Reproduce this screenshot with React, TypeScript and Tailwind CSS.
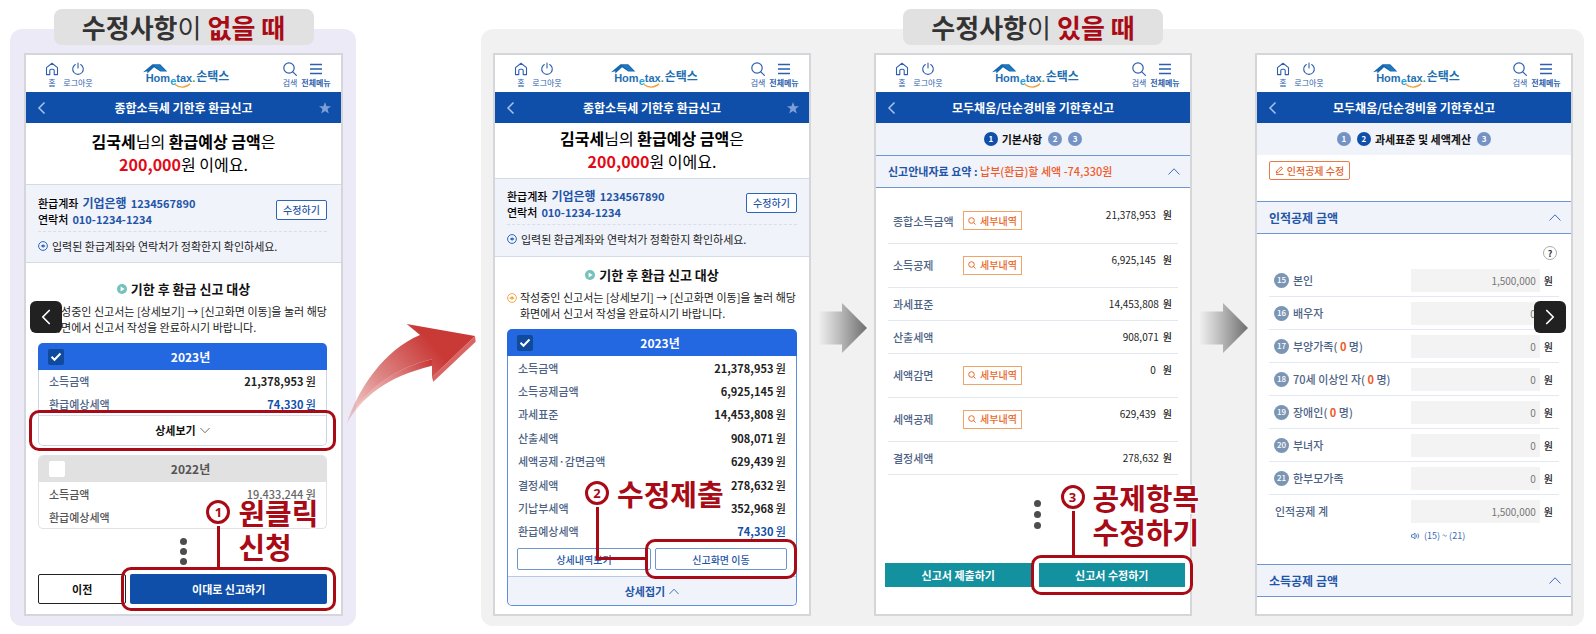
import { useState, type ReactNode } from "react";
import { ChevronLeft, ChevronRight } from "lucide-react";
import clsx from "clsx";

const summary2023 = [
  { label: "소득금액", value: "21,378,953" },
  { label: "소득공제금액", value: "6,925,145" },
  { label: "과세표준", value: "14,453,808" },
  { label: "산출세액", value: "908,071" },
  { label: "세액공제·감면금액", value: "629,439" },
  { label: "결정세액", value: "278,632" },
  { label: "기납부세액", value: "352,968" },
  { label: "환급예상세액", value: "74,330", highlight: true },
];

const basicRows = [
  { label: "종합소득금액", value: "21,378,953", detail: true },
  { label: "소득공제", value: "6,925,145", detail: true },
  { label: "과세표준", value: "14,453,808" },
  { label: "산출세액", value: "908,071" },
  { label: "세액감면", value: "0", detail: true },
  { label: "세액공제", value: "629,439", detail: true },
  { label: "결정세액", value: "278,632" },
];

const deductionRows = [
  { no: 15, label: "본인", value: "1,500,000" },
  { no: 16, label: "배우자", value: "0" },
  { no: 17, label: "부양가족", value: "0", count: 0 },
  { no: 18, label: "70세 이상인 자", value: "0", count: 0 },
  { no: 19, label: "장애인", value: "0", count: 0 },
  { no: 20, label: "부녀자", value: "0" },
  { no: 21, label: "한부모가족", value: "0" },
];

/* ---------- icons ---------- */

function HomeIcon() {
  return (
    <svg width="14" height="14" viewBox="0 0 14 14" fill="none" stroke="#2c5fae" strokeWidth="1.1" strokeLinejoin="round">
      <path d="M1.5 5.6 7 1.2l5.500 4.400V12.600H9.200V8.600a1.400 1.400 0 0 0-1.400-1.400H6.200a1.400 1.400 0 0 0-1.400 1.400v4H1.500z" />
    </svg>
  );
}

function PowerIcon() {
  return (
    <svg width="14" height="14" viewBox="0 0 14 14" fill="none" stroke="#2c5fae" strokeWidth="1.1" strokeLinecap="round">
      <path d="M7 1v5M4.300 2.500a5.300 5.300 0 1 0 5.400 0" />
    </svg>
  );
}

function SearchIcon() {
  return (
    <svg width="14" height="14" viewBox="0 0 14 14" fill="none" stroke="#2c5fae" strokeWidth="1.2" strokeLinecap="round">
      <circle cx="6" cy="6" r="5.200" />
      <path d="m9.800 9.800 3.600 3.600" />
    </svg>
  );
}

function MenuIcon() {
  return (
    <svg width="14" height="14" viewBox="0 0 14 14" stroke="#2c5fae" strokeWidth="1.3">
      <path d="M1 2.500h12M1 7h12M1 11.500h12" />
    </svg>
  );
}

function Caret({ up, className }: { up?: boolean; className?: string }) {
  return (
    <svg className={className} width="12" height="7" viewBox="0 0 12 7" fill="none" stroke="currentColor" strokeWidth="1">
      <path d={up ? "M.5 6.500 6 .8l5.500 5.700" : "M.5.5 6 6.200 11.500.5"} />
    </svg>
  );
}

function NoticeIcon({ color, right }: { color: string; right?: boolean }) {
  return (
    <svg className="mt-1 shrink-0" width="10" height="10" viewBox="0 0 10 10" fill="none">
      <circle cx="5" cy="5" r="4.400" stroke={color} />
      {right ? (
        <path d="M2.500 4.200h2V2.800L7.500 5l-3 2.200V5.800h-2z" fill={color} />
      ) : (
        <path d="M2.800 5 5.500 3v4zM5.500 4.300h1.600v1.400H5.500z" fill={color} />
      )}
    </svg>
  );
}

function HometaxLogo() {
  return (
    <a href="#" className="relative flex items-end gap-px font-bold leading-none text-[#1f6fb2]">
      <svg className="absolute left-0 top-0" width="25" height="10" viewBox="0 0 25 10">
        <path d="M0 8.200 9.500.3h7.700L24.300 7.600h-7L11 3.300 4.300 9.600V7.300z" fill="#1468b0" />
        <path d="M11 .9h5.800L22.600 7h-5z" fill="#2178bd" />
      </svg>
      <span className="relative flex items-baseline pl-[3px] pt-2 font-['Liberation_Sans',sans-serif] text-[11px] leading-3">
        Hom
        <span className="relative top-[3px] text-[#1fa3dc]">e</span>
        tax<span className="text-[#3da447]">.</span>
        <svg className="absolute -bottom-1 right-1" width="17" height="5" viewBox="0 0 17 5" fill="none">
          <path d="M1 1.500C5 5 12 5 16 .8" stroke="#f0a13a" strokeWidth="1.300" />
        </svg>
      </span>
      <span className="pb-px text-[12px] leading-[14px]">손택스</span>
    </a>
  );
}

function GrayArrow({ id }: { id: string }) {
  return (
    <svg width="50" height="52" viewBox="0 0 50 52" className="shrink-0">
      <defs>
        <linearGradient id={id} x1="0" x2="1" y1="0" y2="0">
          <stop offset="0" stopColor="#f1f1f1" />
          <stop offset="0.400" stopColor="#c0c0c0" />
          <stop offset="1" stopColor="#6e6e6e" />
        </linearGradient>
      </defs>
      <path d="M0 9.500h24V1l25 25-25 25v-8.500H0z" fill={`url(#${id})`} />
    </svg>
  );
}

function RedArrow() {
  return (
    <svg className="absolute -left-[10px] top-[323px] z-10" width="131" height="102" viewBox="0 0 131 102">
      <defs>
        <linearGradient id="red-face" gradientUnits="userSpaceOnUse" x1="2" y1="98" x2="88" y2="24">
          <stop offset="0" stopColor="#c93b38" stopOpacity="0.200" />
          <stop offset="0.450" stopColor="#c93b38" stopOpacity="0.600" />
          <stop offset="1" stopColor="#c93a37" />
        </linearGradient>
        <linearGradient id="red-side" gradientUnits="userSpaceOnUse" x1="2" y1="98" x2="88" y2="36">
          <stop offset="0" stopColor="#e58a86" stopOpacity="0.300" />
          <stop offset="1" stopColor="#c5302f" />
        </linearGradient>
      </defs>
      <path d="M.7 100.700C16 74 40 54 86 42.700v-6.400C50 45 20 64 .7 100.700z" fill="url(#red-side)" />
      <path d="m86 54.300 1.300 4.400 42.400-40L129 13z" fill="#d96663" />
      <path d="M.7 100.700C12 66 38 27 74 12L60.700 1 129 13 86 54.300v-18C50 45 20 64 .7 100.700z" fill="url(#red-face)" />
    </svg>
  );
}

/* ---------- annotations ---------- */

function Ring({ className }: { className: string }) {
  return <span className={clsx("pointer-events-none absolute z-20 border-[3px] border-[#a90b16]", className)} />;
}

function Callout({ no, className, line, children }: { no: number; className: string; line: string; children: ReactNode }) {
  return (
    <div className={clsx("pointer-events-none absolute z-20 flex items-start gap-2 text-[#a90b16]", className)}>
      <span className="mt-[5px] flex size-6 shrink-0 items-center justify-center rounded-full border-[3px] border-[#a90b16] bg-white font-['Noto_Sans',sans-serif] text-[13px] font-bold leading-none">
        {no}
      </span>
      <span className="whitespace-nowrap text-left text-[29px] font-bold leading-[34px] [text-shadow:0_0_2px_#fff,1px_1px_0_#fff,-1px_-1px_0_#fff,1px_-1px_0_#fff,-1px_1px_0_#fff]">
        {children}
      </span>
      <span className={clsx("absolute left-[11px] top-[31px] border-l-[3px] border-[#a90b16]", line)} />
    </div>
  );
}

function Dots({ className }: { className?: string }) {
  return (
    <div className={clsx("flex flex-col items-center", className)}>
      <span className="size-[7px] rounded-full bg-[#4d4d4d]" />
      <span className="size-[7px] rounded-full bg-[#4d4d4d]" />
      <span className="size-[7px] rounded-full bg-[#4d4d4d]" />
    </div>
  );
}

/* ---------- phone parts ---------- */

function Phone({ title, star, children }: { title: string; star?: boolean; children: ReactNode }) {
  const tool = "flex flex-col items-center gap-px text-[8px] leading-[11px] text-[#2c5fae] whitespace-nowrap";
  return (
    <article className="flex min-w-0 flex-1 flex-col border-2 border-[#d5d6d9] bg-white">
      <header className="flex h-[37px] items-start pl-[15px] pr-[10px] pt-[7px]">
        <div className="flex flex-1">
          <button className={clsx(tool, "w-[22px]")}>
            <HomeIcon />홈
          </button>
          <button className={clsx(tool, "w-[30px]")}>
            <PowerIcon />
            로그아웃
          </button>
        </div>
        <div className="pt-[2px]">
          <HometaxLogo />
        </div>
        <div className="flex flex-1 justify-end">
          <button className={clsx(tool, "w-[22px]")}>
            <SearchIcon />
            검색
          </button>
          <button className={clsx(tool, "w-[30px] font-bold")}>
            <MenuIcon />
            전체메뉴
          </button>
        </div>
      </header>
      <div className="flex h-[31px] items-center bg-[#0f4fa9] px-[10px]">
        <button aria-label="이전 화면" className="w-3 text-[#a9c4ec]">
          <svg width="12" height="14" viewBox="0 0 12 14" fill="none" stroke="currentColor" strokeWidth="1.500">
            <path d="M8.500 1.500 3 7l5.500 5.500" />
          </svg>
        </button>
        <h2 className="flex-1 text-center text-[12px] font-bold text-white">{title}</h2>
        <span className="w-3">
          {star && (
            <button aria-label="즐겨찾기" className="block">
              <svg width="12" height="12" viewBox="0 0 12 12">
                <path d="m6 0 1.600 4.200 4.400.1-3.500 2.700 1.300 4.500L6 8.900l-3.800 2.600L3.500 7 0 4.300l4.400-.1z" fill="#7c9fd6" />
              </svg>
            </button>
          )}
        </span>
      </div>
      {children}
    </article>
  );
}

function RefundHeadline({ className }: { className: string }) {
  return (
    <p className={clsx("text-center text-[16px] leading-[23px] text-black", className)}>
      <b>김국세</b>님의 <b>환급예상 금액</b>은
      <br />
      <b className="text-[#e30a17]">200,000</b>원 이에요.
    </p>
  );
}

function AccountInfo({ className }: { className: string }) {
  return (
    <div className={clsx("border-y border-[#d3dae8] bg-[#f1f3fa] pl-3", className)}>
      <div className="flex items-center justify-between border-b border-dashed border-[#d9deec]">
        <div className="pb-1 text-[11px] font-medium leading-4 text-black">
          <p className="flex gap-1">
            환급계좌
            <span className="flex gap-1 font-bold text-[#1f55a8]">
              <span className="text-[12px]">기업은행</span>1234567890
            </span>
          </p>
          <p className="flex gap-1">
            연락처 <span className="font-bold text-[#1f55a8]">010-1234-1234</span>
          </p>
        </div>
        <button className="mb-[6px] h-5 w-[51px] rounded-xs border border-[#2c66b8] bg-white text-[10px] font-medium leading-none text-[#1f55a8]">
          수정하기
        </button>
      </div>
      <p className="mt-[5px] flex gap-1 text-[11px] leading-[18px] text-[#222]">
        <NoticeIcon color="#2c66b8" />
        입력된 환급계좌와 연락처가 정확한지 확인하세요.
      </p>
    </div>
  );
}

function TargetTitle({ className }: { className: string }) {
  return (
    <h3 className={clsx("flex items-center justify-center gap-1 text-[13px] font-bold leading-5 text-[#111]", className)}>
      <svg width="10" height="10" viewBox="0 0 10 10">
        <circle cx="5" cy="5" r="5" fill="#74c2bb" />
        <path d="M3.600 2.600v4.800L7.600 5z" fill="#fff" />
      </svg>
      기한 후 환급 신고 대상
    </h3>
  );
}

function TargetNote() {
  return (
    <div className="flex gap-[3px] whitespace-nowrap px-3 text-[11px] leading-4 text-[#222]">
      <NoticeIcon color="#f0a84a" right />
      <p>
        작성중인 신고서는 [상세보기] → [신고화면 이동]을 눌러 해당
        <br />
        화면에서 신고서 작성을 완료하시기 바랍니다.
      </p>
    </div>
  );
}

function YearHeader({ year, checked, muted }: { year: string; checked?: boolean; muted?: boolean }) {
  const [on, setOn] = useState(!!checked);
  return (
    <label
      className={clsx(
        "flex h-[27px] items-center rounded-t-[5px] px-[10px] text-[12px] font-bold",
        muted ? "bg-[#e1e1e1] text-[#555]" : "bg-[#2367e1] text-white"
      )}
    >
      <span className="grid size-4 place-items-center">
        <input
          type="checkbox"
          checked={on}
          onChange={(e) => setOn(e.target.checked)}
          className="size-4 appearance-none rounded-xs bg-white [grid-area:1/1] checked:bg-[#0f4a9d]"
        />
        {on && (
          <svg className="pointer-events-none [grid-area:1/1]" width="12" height="10" viewBox="0 0 12 10" fill="none" stroke="#fff" strokeWidth="2">
            <path d="m1.500 4.800 3 3 6-6.300" />
          </svg>
        )}
      </span>
      <span className="flex-1 text-center">{year}</span>
    </label>
  );
}

type Row = { label: string; value: string; highlight?: boolean };

function SummaryTable({ rows, muted, className }: { rows: Row[]; muted?: boolean; className: string }) {
  return (
    <table className={clsx("w-full text-[11px] font-medium leading-4", className)}>
      <tbody>
        {rows.map((row) => (
          <tr key={row.label}>
            <th scope="row" className={clsx("pl-[10px] text-left font-medium", muted ? "text-[#555]" : "text-[#4d6385]")}>
              {row.label}
            </th>
            <td className={clsx("pr-[10px] text-right", muted ? "text-[#666]" : row.highlight ? "text-[#0f4fa9]" : "text-[#222]")}>
              <span className={muted ? "font-medium" : "font-bold"}>{row.value}</span>
              {row.value && " 원"}
            </td>
          </tr>
        ))}
      </tbody>
    </table>
  );
}

function Step({ no, active }: { no: number; active?: boolean }) {
  return (
    <span
      className={clsx(
        "flex size-[14px] items-center justify-center rounded-full text-[8px] font-bold leading-none text-white",
        active ? "bg-[#0f4fa9]" : "bg-[#7493c4]"
      )}
    >
      {no}
    </span>
  );
}

function AccordionBar({ children, className }: { children: ReactNode; className?: string }) {
  return (
    <button
      className={clsx(
        "flex h-[33px] w-full items-center justify-between border-y border-[#6f97cf] bg-[#f1f3fa] pl-3 pr-[10px] text-left font-bold text-[#1f55a8]",
        className
      )}
    >
      <span>{children}</span>
      <Caret up className="text-[#3f6fb8]" />
    </button>
  );
}

/* ---------- screens ---------- */

function OneClickScreen() {
  return (
    <Phone title="종합소득세 기한후 환급신고" star>
      <RefundHeadline className="pb-2 pt-[7px]" />
      <AccountInfo className="pb-[7px] pr-[14px] pt-[10px]" />
      <TargetTitle className="mt-4" />
      <div className="mt-1">
        <TargetNote />
      </div>
      <div className="ml-3 mr-[14px] mt-2">
        <YearHeader year="2023년" checked />
        <div className="rounded-b-[5px] border border-t-0 border-[#ccd5e6]">
          <SummaryTable
            className="h-[45px]"
            rows={[
              { label: "소득금액", value: "21,378,953" },
              { label: "환급예상세액", value: "74,330", highlight: true },
            ]}
          />
          <div className="relative border-t border-[#d8dce6]">
            <button className="flex h-[29px] w-full items-center justify-center gap-1 rounded-b-[5px] bg-white text-[11px] font-bold text-[#111]">
              상세보기 <Caret className="w-[10px] text-[#555]" />
            </button>
            <Ring className="-inset-x-[10px] -inset-y-[6px] rounded-[10px]" />
          </div>
        </div>
      </div>
      <div className="ml-3 mr-[14px] mt-[9px] rounded-[5px] border border-t-0 border-[#e1e1e1]">
        <YearHeader year="2022년" muted />
        <SummaryTable
          muted
          className="h-[46px]"
          rows={[
            { label: "소득금액", value: "19,433,244" },
            { label: "환급예상세액", value: "" },
          ]}
        />
      </div>
      <Dots className="mt-[9px] gap-[3px]" />
      <div className="mb-[10px] ml-3 mr-[14px] mt-auto flex h-[30px] gap-1 text-[11px] font-bold">
        <button className="flex-[87] rounded-xs border border-[#222] bg-white text-[#111]">이전</button>
        <div className="relative flex flex-[198]">
          <button className="flex-1 rounded-xs bg-[#0f4fa9] text-white">이대로 신고하기</button>
          <Ring className="-inset-x-[9px] -inset-y-[7px] rounded-[10px]" />
          <Callout no={1} className="-top-[79px] left-[76px]" line="h-[42px]">
            원클릭
            <br />
            신청
          </Callout>
        </div>
      </div>
    </Phone>
  );
}

function ReviseScreen() {
  return (
    <Phone title="종합소득세 기한후 환급신고" star>
      <RefundHeadline className="pb-[5px] pt-1" />
      <AccountInfo className="pb-[8px] pr-3 pt-[9px]" />
      <TargetTitle className="mt-2" />
      <div className="mt-1">
        <TargetNote />
      </div>
      <div className="mx-3 mt-2">
        <YearHeader year="2023년" checked />
        <div className="rounded-b-[5px] border border-t-0 border-[#5d8fdc]">
          <SummaryTable rows={summary2023} className="h-[187px]" />
          <div className="mx-[9px] mb-[6px] mt-[5px] flex gap-1 text-[10px] font-medium text-[#1f55a8]">
            <button className="h-[22px] flex-1 rounded-xs border border-[#6f97cf] bg-white">상세내역보기</button>
            <div className="relative flex flex-1">
              <button className="h-[22px] flex-1 rounded-xs border border-[#6f97cf] bg-white">신고화면 이동</button>
              <Ring className="-inset-x-[10px] -inset-y-[9px] rounded-[10px]" />
              <Callout no={2} className="-left-[70px] -top-[72px]" line="h-[53px] w-[51px] border-b-[3px]">
                수정제출
              </Callout>
            </div>
          </div>
          <button className="flex h-[29px] w-full items-center justify-center gap-1 rounded-b-[5px] border-t border-[#b9c9e6] bg-[#f1f3fa] text-[11px] font-bold text-[#1f55a8]">
            상세접기 <Caret up className="w-[10px]" />
          </button>
        </div>
      </div>
    </Phone>
  );
}

function BasicInfoScreen() {
  return (
    <Phone title="모두채움/단순경비율 기한후신고">
      <div className="flex h-8 items-center justify-center gap-[6px] bg-[#f1f3fa] text-[11px] font-bold text-[#111]">
        <span className="flex items-center gap-1">
          <Step no={1} active />
          기본사항
        </span>
        <Step no={2} />
        <Step no={3} />
      </div>
      <AccordionBar className="text-[11px]">
        신고안내자료 요약 : <span className="font-medium text-[#f05a28]">납부(환급)할 세액 -74,330원</span>
      </AccordionBar>
      <div className="mx-3 mt-[11px]">
        <table className="w-full text-[11px] leading-4">
          <tbody>
            {basicRows.map((row) => (
              <tr key={row.label} className={clsx("border-b border-[#e3e7ee]", row.detail ? "h-11" : "h-[33px]")}>
                <th scope="row" className="w-[75px] whitespace-nowrap pl-[5px] text-left font-medium text-[#4d6385]">
                  {row.label}
                </th>
                <td>
                  {row.detail && (
                    <button className="flex h-[19px] w-[59px] items-center justify-center gap-1 border border-[#f0a468] text-[10px] font-medium text-[#e8692a]">
                      <svg width="8" height="8" viewBox="0 0 8 8" fill="none" stroke="currentColor" strokeWidth="1">
                        <circle cx="3.500" cy="3.500" r="2.800" />
                        <path d="m5.500 5.500 2 2" />
                      </svg>
                      세부내역
                    </button>
                  )}
                </td>
                <td
                  className={clsx(
                    "pr-[6px] text-right text-[10px] text-[#222]",
                    row.detail && "pt-2 align-top"
                  )}
                >
                  {row.value}
                  <span className={clsx("font-medium", row.detail ? "ml-[7px]" : "ml-1")}>원</span>
                </td>
              </tr>
            ))}
          </tbody>
        </table>
      </div>
      <Dots className="mt-[25px] gap-1 pl-2" />
      <div className="mb-[27px] ml-[9px] mr-[5px] mt-auto flex h-6 gap-[7px] text-[11px] font-bold text-white">
        <button className="flex-1 bg-[#13919f]">신고서 제출하기</button>
        <div className="relative flex flex-1">
          <button className="flex-1 bg-[#13919f]">신고서 수정하기</button>
          <Ring className="-inset-x-2 -inset-y-2 rounded-[10px]" />
          <Callout no={3} className="-top-[83px] left-[22px]" line="h-[45px]">
            공제항목
            <br />
            수정하기
          </Callout>
        </div>
      </div>
    </Phone>
  );
}

function AmountField({ id, value }: { id: string; value: string }) {
  return (
    <span className="flex items-center gap-1 text-[10px] font-medium text-[#222]">
      <input
        id={id}
        readOnly
        value={value}
        className="h-[23px] w-[129px] bg-[#f3f3f3] pr-1 text-right font-normal text-[#777]"
      />
      원
    </span>
  );
}

function DeductionScreen() {
  return (
    <Phone title="모두채움/단순경비율 기한후신고">
      <div className="flex h-8 items-center justify-center gap-[6px] bg-[#f1f3fa] text-[11px] font-bold text-[#111]">
        <Step no={1} />
        <span className="flex items-center gap-1">
          <Step no={2} active />
          과세표준 및 세액계산
        </span>
        <Step no={3} />
      </div>
      <div className="px-3 pb-[21px] pt-[6px]">
        <button className="flex h-[19px] w-[81px] items-center justify-center gap-[3px] rounded-xs border border-[#ea7a45] text-[10px] font-medium text-[#e2602a]">
          <svg width="9" height="9" viewBox="0 0 9 9" fill="none" stroke="currentColor" strokeWidth="1">
            <path d="M1.200 7 1.700 5 5.900.8l1.600 1.500L3.300 6.500zM1 8.400h7.500" />
          </svg>
          인적공제 수정
        </button>
      </div>
      <AccordionBar className="text-[12px]">인적공제 금액</AccordionBar>
      <div className="flex justify-end pr-[14px] pt-3">
        <button aria-label="도움말" className="flex size-[14px] items-center justify-center rounded-full border border-[#aaa] text-[9px] font-bold leading-none text-[#333]">
          ?
        </button>
      </div>
      <div className="mx-3 mt-1">
        {deductionRows.map((row) => (
          <div key={row.no} className="flex h-[33px] items-center justify-between border-b border-[#e3e9f2] pl-[5px] pr-[6px]">
            <label htmlFor={`deduction-${row.no}`} className="flex items-center gap-1 text-[11px] font-medium text-[#4d6385]">
              <span className="flex size-[15px] items-center justify-center rounded-full bg-[#7b95b5] text-[8px] leading-none text-white">
                {row.no}
              </span>
              <span>
                {row.label}
                {row.count !== undefined && (
                  <>
                    ( <b className="text-[#f05a28]">{row.count}</b> 명)
                  </>
                )}
              </span>
            </label>
            <AmountField id={`deduction-${row.no}`} value={row.value} />
          </div>
        ))}
        <div className="flex h-[33px] items-center justify-between px-[6px]">
          <label htmlFor="deduction-total" className="text-[11px] font-medium text-[#4d6385]">
            인적공제 계
          </label>
          <AmountField id="deduction-total" value="1,500,000" />
        </div>
        <p className="ml-auto flex w-[148px] items-center gap-1 text-[9px] leading-4 text-[#3468b5]">
          <svg width="9" height="8" viewBox="0 0 9 8" fill="none" stroke="currentColor" strokeWidth="0.800">
            <path d="M.5 2.800h1.500L4 1v6L2 5.200H.5zM5.300 2.500q1 1.500 0 3M6.800 1.500q2 2.500 0 5" />
          </svg>
          (15) ~ (21)
        </p>
      </div>
      <AccordionBar className="mb-[17px] mt-auto text-[12px]">소득공제 금액</AccordionBar>
    </Phone>
  );
}

function CaseTitle({ lead, accent }: { lead: string; accent: string }) {
  return (
    <h1 className="mx-auto -mt-5 mb-2 flex h-9 w-[260px] items-center justify-center gap-[6px] rounded-lg bg-[#e1e1e1] text-[26px] leading-none text-[#333]">
      <span>
        <b>{lead}</b>이
      </span>
      <b className="text-[#a90b16]">{accent}</b>
    </h1>
  );
}

export default function App() {
  return (
    <main className="relative flex bg-white pb-2 pl-[10px] pr-3 pt-[29px] font-['Noto_Sans_CJK_KR',sans-serif]">
      <section className="flex min-w-0 flex-[319] flex-col rounded-xl bg-[#eceaf7] pb-[10px] pl-[14px] pr-[13px]">
        <CaseTitle lead="수정사항" accent="없을 때" />
        <div className="flex flex-1">
          <OneClickScreen />
        </div>
      </section>

      <div className="w-[125px] shrink-0">
        <div className="relative -mt-[29px]">
          <RedArrow />
        </div>
      </div>

      <section className="flex min-w-0 flex-[1080] flex-col rounded-xl bg-[#f1f1f1] pb-[10px] pl-3 pr-[11px]">
        <CaseTitle lead="수정사항" accent="있을 때" />
        <div className="flex min-h-[563px] flex-1">
          <ReviseScreen />
          <div className="flex w-[63px] shrink-0 justify-center pt-[249px]">
            <GrayArrow id="arrow-basic" />
          </div>
          <BasicInfoScreen />
          <div className="flex w-[63px] shrink-0 justify-center pt-[249px]">
            <GrayArrow id="arrow-deduction" />
          </div>
          <DeductionScreen />
        </div>
      </section>

      <button
        aria-label="이전 슬라이드"
        className="absolute left-[30px] top-[301px] z-30 flex size-8 items-center justify-center rounded-md bg-[#212121] text-white"
      >
        <ChevronLeft size={26} strokeWidth={1.6} />
      </button>
      <button
        aria-label="다음 슬라이드"
        className="absolute right-[30px] top-[301px] z-30 flex size-8 items-center justify-center rounded-md bg-[#212121] text-white"
      >
        <ChevronRight size={26} strokeWidth={1.6} />
      </button>
    </main>
  );
}
